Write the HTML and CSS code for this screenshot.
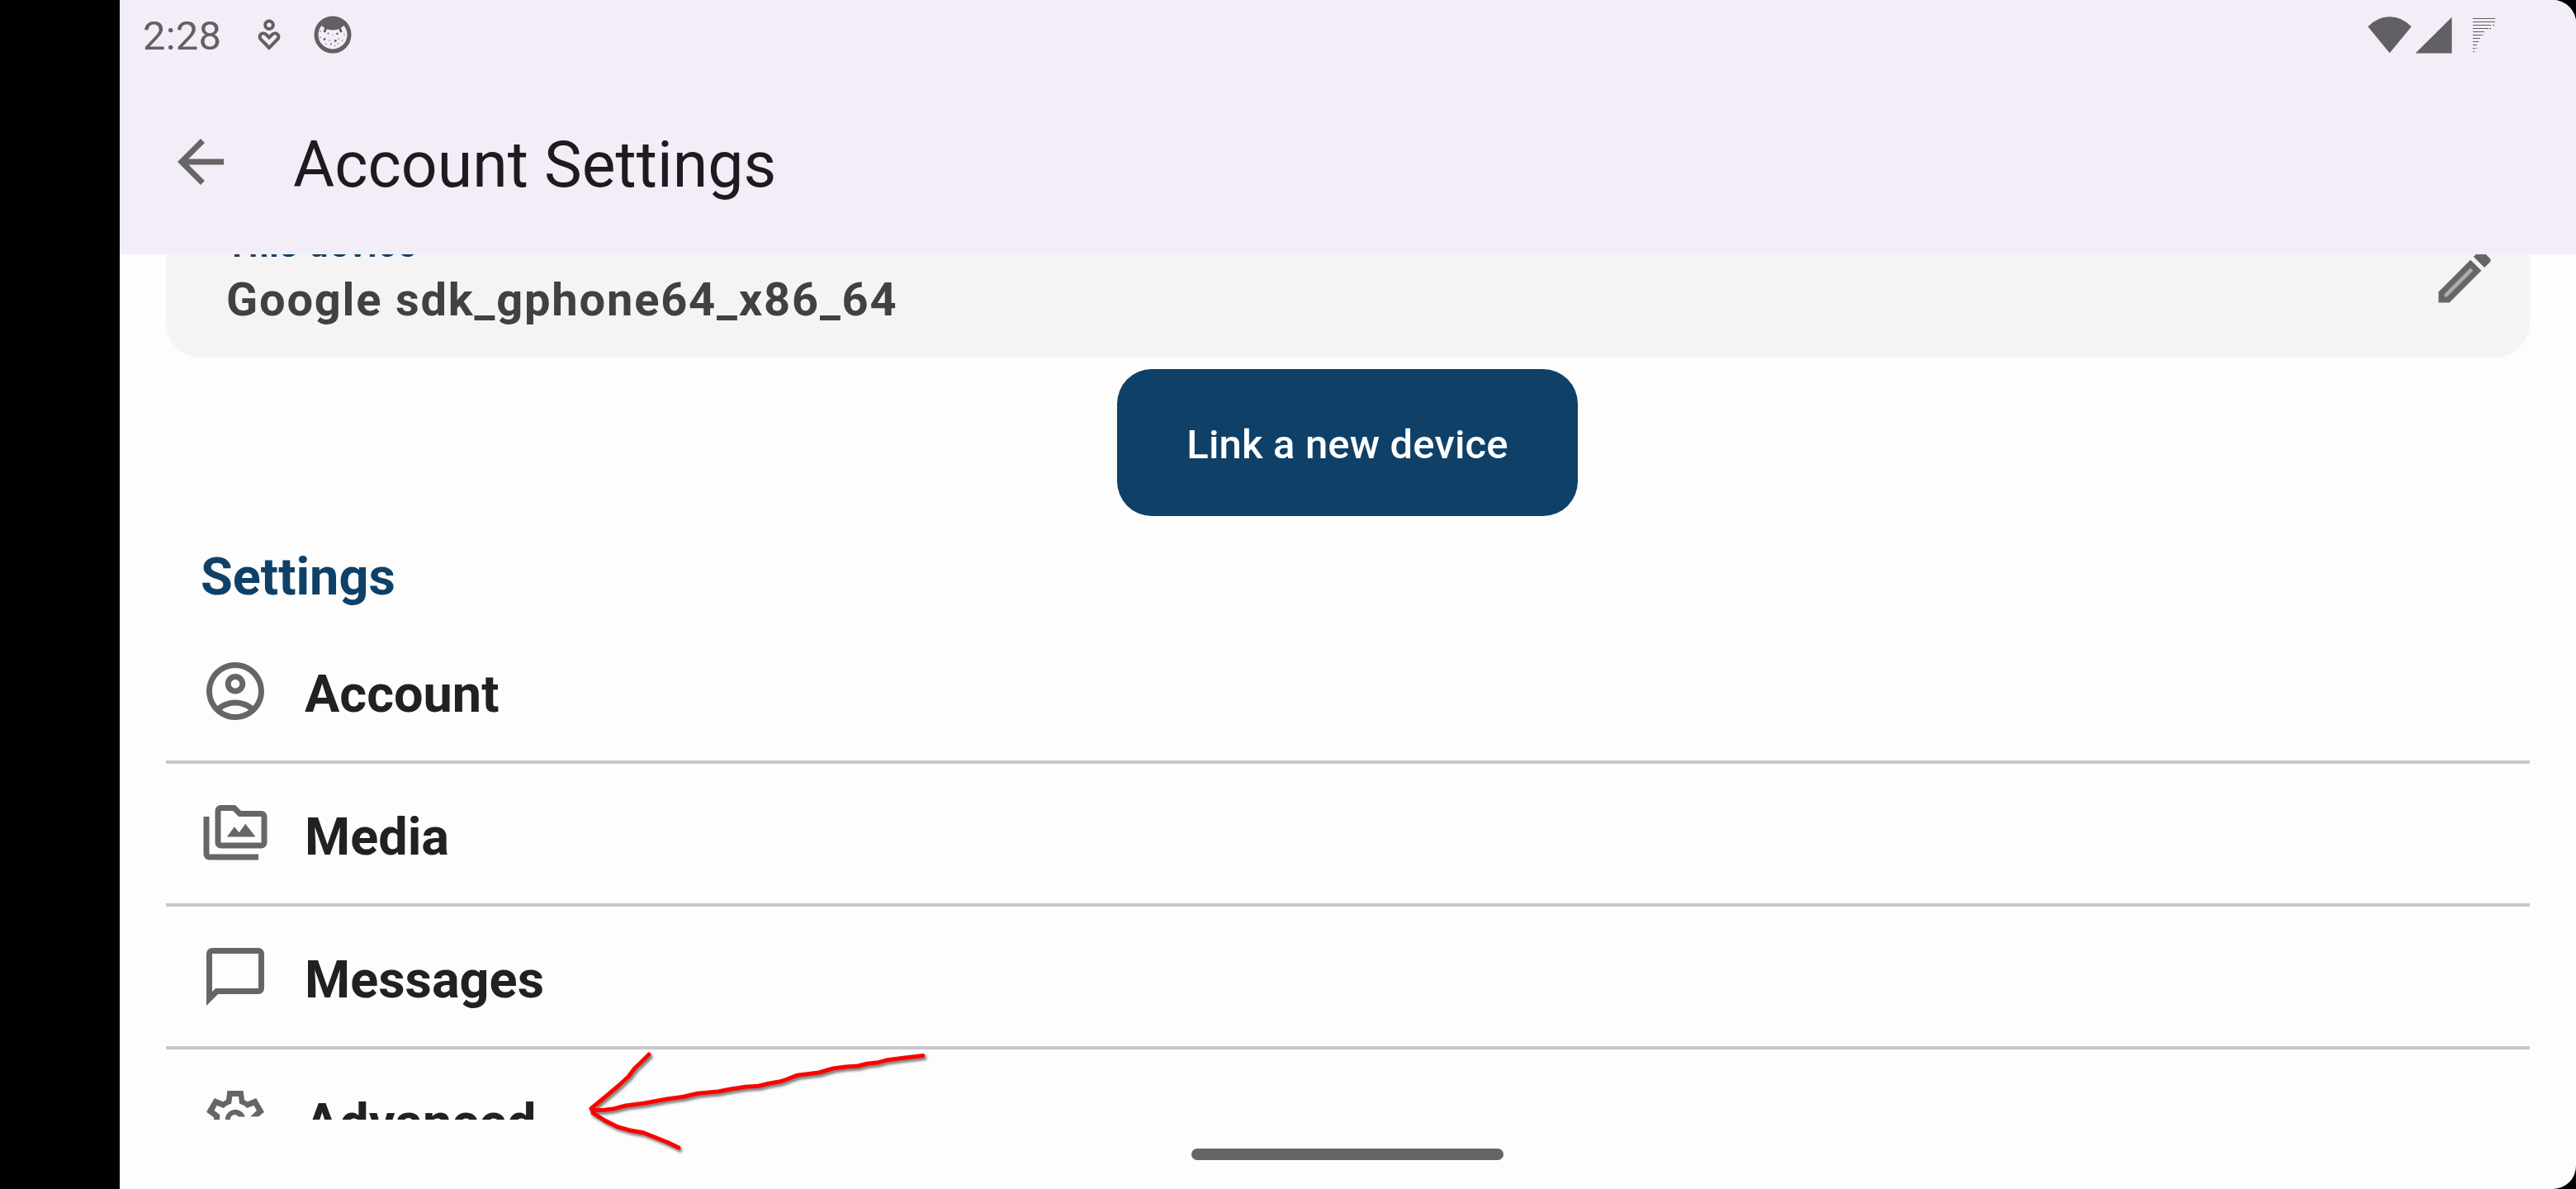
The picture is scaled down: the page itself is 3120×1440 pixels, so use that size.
FILE: index.html
```html
<!DOCTYPE html>
<html lang="en">
<head>
<meta charset="utf-8">
<title>Account Settings</title>
<link rel="stylesheet" href="styles.css">
</head>
<body>
<div class="cutout"></div>
<div class="screen">
  <header class="header">
    <div class="status-bar">
      <span class="clock">2:28</span>
      <svg class="status-heart" width="30" height="44" viewBox="0 0 30 44" fill="none" stroke="#626064" stroke-width="4">
        <circle cx="15" cy="9.3" r="4.8"/>
        <path d="M15 37 5 26.700Q2.600 24 4.300 21.200C6.200 18.600 9.700 19 11.400 21L15 24.500 18.600 21C20.300 19 23.800 18.600 25.700 21.200Q27.400 24 25 26.700Z"/>
      </svg>
      <svg class="status-face" width="46" height="46" viewBox="0 0 46 46" fill="#626064">
        <circle cx="23" cy="23" r="20" fill="none" stroke="#626064" stroke-width="5"/>
        <path d="M8 10Q23-2 38 10Q33 17.500 23 17.500T8 10Z"/>
        <path d="M16 12 12.800 20M30 12 33.500 20" fill="none" stroke="#626064" stroke-width="3"/>
        <circle cx="8" cy="19" r=".8"/><circle cx="8" cy="26" r=".8"/><circle cx="13" cy="28.500" r="1.400"/><circle cx="17.500" cy="21.500" r="1"/><circle cx="19" cy="30" r=".7"/><circle cx="23.500" cy="23" r=".6"/><circle cx="28.500" cy="21.800" r="1.300"/><circle cx="26.300" cy="30.500" r="1.400"/><circle cx="30" cy="28" r=".7"/><circle cx="37" cy="23" r=".7"/><circle cx="34.600" cy="30" r=".7"/><circle cx="14.800" cy="34.400" r=".7"/><circle cx="21" cy="34.200" r="1"/><circle cx="29.500" cy="34.300" r=".7"/><circle cx="25.500" cy="36.500" r=".7"/>
      </svg>
      <svg class="status-signals" width="156" height="46" viewBox="0 0 156 46" fill="#626064">
        <path d="M0 12.200Q11.500.2 26.300.2T52.700 12.200L26.300 44.200Z"/>
        <path d="M57.500 44.600 101.600.7V44.600Z"/>
        <path shape-rendering="crispEdges" d="M127 2h27v1h-27zM127 6h27v1h-27zM127 10h22v1h-22zM151 10h2v1h-2zM127 14h19v1h-19zM147 14h2v1h-2zM127 18h14v1h-14zM127 22h11v1h-11zM139 22h1v1h-1zM127 26h9v1h-9zM127 30h7v1h-7zM127 34h5v1h-5zM127 38h3v1h-3zM131 38h1v1h-1zM127 42h1v1h-1zM129 42h1v1h-1z"/>
      </svg>
    </div>
    <div class="app-bar">
      <svg class="icon" viewBox="0 0 24 24"><path d="M20 11H7.830l5.590-5.590L12 4l-8 8 8 8 1.410-1.410L7.830 13H20z"/></svg>
      <h1 class="title">Account Settings</h1>
    </div>
  </header>

  <main class="content">
    <section class="device-card">
      <div>
        <div class="device-label">This device</div>
        <div class="device-name">Google sdk_gphone64_x86_64</div>
      </div>
      <svg class="icon" viewBox="0 0 24 24"><path d="M3 17.250V21h3.750L17.810 9.940l-3.750-3.750zM20.710 7.040a1 1 0 0 0 0-1.410l-2.340-2.340a1 1 0 0 0-1.410 0l-1.830 1.830 3.750 3.750z"/><path class="icon-inner" d="M5 18.080V19h.92l9.060-9.060-.92-.92z"/></svg>
    </section>
    <button class="link-button">Link a new device</button>
    <h2 class="section-title">Settings</h2>
    <ul class="list">
      <li class="row">
        <svg class="icon" viewBox="0 0 24 24"><path d="M12 2C6.480 2 2 6.480 2 12s4.480 10 10 10 10-4.480 10-10S17.520 2 12 2zM7.350 18.500C8.660 17.560 10.260 17 12 17s3.340.56 4.650 1.500C15.340 19.440 13.740 20 12 20s-3.340-.56-4.650-1.500zm10.790-1.380C16.450 15.800 14.320 15 12 15s-4.450.8-6.140 2.120C4.700 15.730 4 13.950 4 12c0-4.420 3.580-8 8-8s8 3.580 8 8c0 1.950-.7 3.730-1.860 5.120zM12 6c-1.930 0-3.500 1.570-3.500 3.500S10.070 13 12 13s3.500-1.570 3.500-3.500S13.930 6 12 6zm0 5c-.83 0-1.500-.67-1.500-1.500S11.170 8 12 8s1.500.67 1.500 1.500S12.830 11 12 11z"/></svg>
        <span class="row-label">Account</span>
      </li>
      <li class="row">
        <svg class="icon" viewBox="0 0 24 24"><path fill-rule="evenodd" d="M3 6H1v13a2 2 0 0 0 2 2h17v-2H3zM21 4h-7l-2-2H7a2 2 0 0 0-2 2V15a2 2 0 0 0 2 2h14a2 2 0 0 0 2-2V6a2 2 0 0 0-2-2zm0 11H7V4h4.170l2 2H21zM15.500 8.500 13.300 11.500 11.700 9.500 9.100 13H19z"/></svg>
        <span class="row-label">Media</span>
      </li>
      <li class="row">
        <svg class="icon" viewBox="0 0 24 24"><path fill-rule="evenodd" d="M4 2a2 2 0 0 0-2 2v18l4-4h14a2 2 0 0 0 2-2V4a2 2 0 0 0-2-2zM4 4h16v12H5.170L4 17.170z"/></svg>
        <span class="row-label">Messages</span>
      </li>
      <li class="row">
        <svg class="icon" viewBox="0 0 24 24"><path d="M4.570 12.700V11.240L2 9.330 4.800 4.570 7.800 5.800 8.860 5.140 9.240 2H14.760L15.140 5.140 16.200 5.800 19.200 4.570 22 9.330 20.100 10.900H17.240L19.400 8.860 18.450 7.050 16.050 8Q14.900 6.800 13.430 6.400L13.140 4H10.950L10.600 6.400Q9 6.900 7.950 8L5.600 7.050 4.700 8.860 6.650 10.300 6.500 12.700Z"/><path d="M8.570 12.700A3.500 3.500 0 0 1 15.350 11H13.100A1.500 1.500 0 0 0 10.500 12.700Z"/></svg>
        <span class="row-label">Advanced</span>
      </li>
    </ul>
  </main>

  <footer class="nav-bar"><div class="nav-handle"></div></footer>
</div>

<svg class="annotation" width="440" height="140" viewBox="700 1265 440 140">
  <path d="M786 1277 778 1285 768.500 1294 761 1304 749 1315 736 1326 722.600 1337 716 1342.500"/>
  <path d="M717 1344.500 732 1344.300 744 1342.700 758 1339 781 1336 808 1331 828 1328.300 845 1324.300 869.500 1322 885 1319 903 1316.300 918.500 1315.300 931 1312.300 944 1310C953 1308 960 1303.500 967.500 1302L992 1299 1009 1294 1024 1292 1039 1291 1050 1288.300 1064 1286.700 1075 1283.700 1096 1281 1118 1278.500"/>
  <path d="M718 1348 732 1356.700 747 1364.300 762 1368.700 779 1371.700 793 1377.300 808 1383.300 822 1390"/>
</svg>
</body>
</html>
```
FILE: styles.css
```css
* {
  box-sizing: border-box;
}

body {
  margin: 0;
  width: 3120px;
  height: 1440px;
  display: flex;
  overflow: hidden;
  background: #000;
  font-family: Roboto, "Liberation Sans", sans-serif;
}

.cutout {
  flex: 0 0 145px;
}

.screen {
  flex: 1;
  display: flex;
  flex-direction: column;
  overflow: hidden;
  background: #fdfdfd;
  border-radius: 0 28px 28px 0;
}

.header {
  flex: 0 0 308px;
  background: #f3edf7;
}

.status-bar {
  height: 84px;
  display: flex;
  align-items: center;
  padding: 0 96px 0 28px;
}

.clock {
  width: 138px;
  padding-top: 4px;
  font-size: 49px;
  line-height: 58px;
  letter-spacing: 0.2px;
  color: #626064;
}

.status-heart {
  margin-top: 2px;
}

.status-face {
  margin-left: 39px;
}

.status-signals {
  margin-left: auto;
  margin-top: 2px;
}

.app-bar {
  height: 224px;
  display: flex;
  align-items: center;
  gap: 70px;
  padding-left: 56px;
}

.title {
  margin: 0;
  padding-top: 8px;
  font-size: 77px;
  line-height: 98px;
  font-weight: 400;
  color: #1d1b20;
}

.icon {
  flex: none;
  width: 84px;
  height: 84px;
  fill: #666;
}

.icon-inner {
  fill: #adadad;
}

.content {
  flex: 0 0 1048px;
  display: flex;
  flex-direction: column;
  padding: 0 56px;
  overflow: hidden;
}

/* The list is scrolled, so the card starts above the visible area. */
.device-card {
  flex: none;
  height: 196px;
  margin-top: -71px;
  padding: 30px 37px 0 73px;
  display: flex;
  justify-content: space-between;
  align-items: flex-start;
  border-radius: 42px;
  background: #f4f4f4;
}

.device-card .icon {
  margin-top: 26px;
}

.device-label {
  font-size: 42px;
  line-height: 60px;
  font-weight: 700;
  letter-spacing: 1.4px;
  color: #0f4168;
}

.device-name {
  font-size: 56px;
  line-height: 72px;
  font-weight: 700;
  letter-spacing: 1.8px;
  color: #414141;
}

.link-button {
  flex: none;
  align-self: center;
  width: 558px;
  height: 178px;
  margin: 14px 1px 0 0;
  padding: 5px 0 0;
  border: 0;
  border-radius: 42px;
  background: #0f4168;
  color: #fff;
  font: 500 49px Roboto, "Liberation Sans", sans-serif;
  letter-spacing: 0.15px;
}

.section-title {
  margin: 37px 0 0 42px;
  font-size: 63px;
  line-height: 74px;
  font-weight: 700;
  color: #0f4168;
}

.list {
  margin: 16px 0 0;
  padding: 0;
  list-style: none;
}

.row {
  height: 173px;
  display: flex;
  align-items: center;
  gap: 42px;
  padding-left: 42px;
  border-bottom: 4px solid #cac4d0;
}

.row-label {
  padding-top: 8px;
  font-size: 63px;
  line-height: 74px;
  font-weight: 700;
  color: #212121;
}

.nav-bar {
  flex: 1;
  display: flex;
  align-items: center;
  justify-content: center;
  padding-right: 1px;
}

.nav-handle {
  width: 378px;
  height: 14px;
  border-radius: 7px;
  background: #666;
}

.annotation {
  position: absolute;
  left: 700px;
  top: 1265px;
  fill: none;
  stroke: #f00;
  stroke-width: 5;
  stroke-linecap: round;
  stroke-linejoin: round;
  filter: drop-shadow(2px 3px 1.5px rgba(0, 0, 0, 0.5));
}
```
